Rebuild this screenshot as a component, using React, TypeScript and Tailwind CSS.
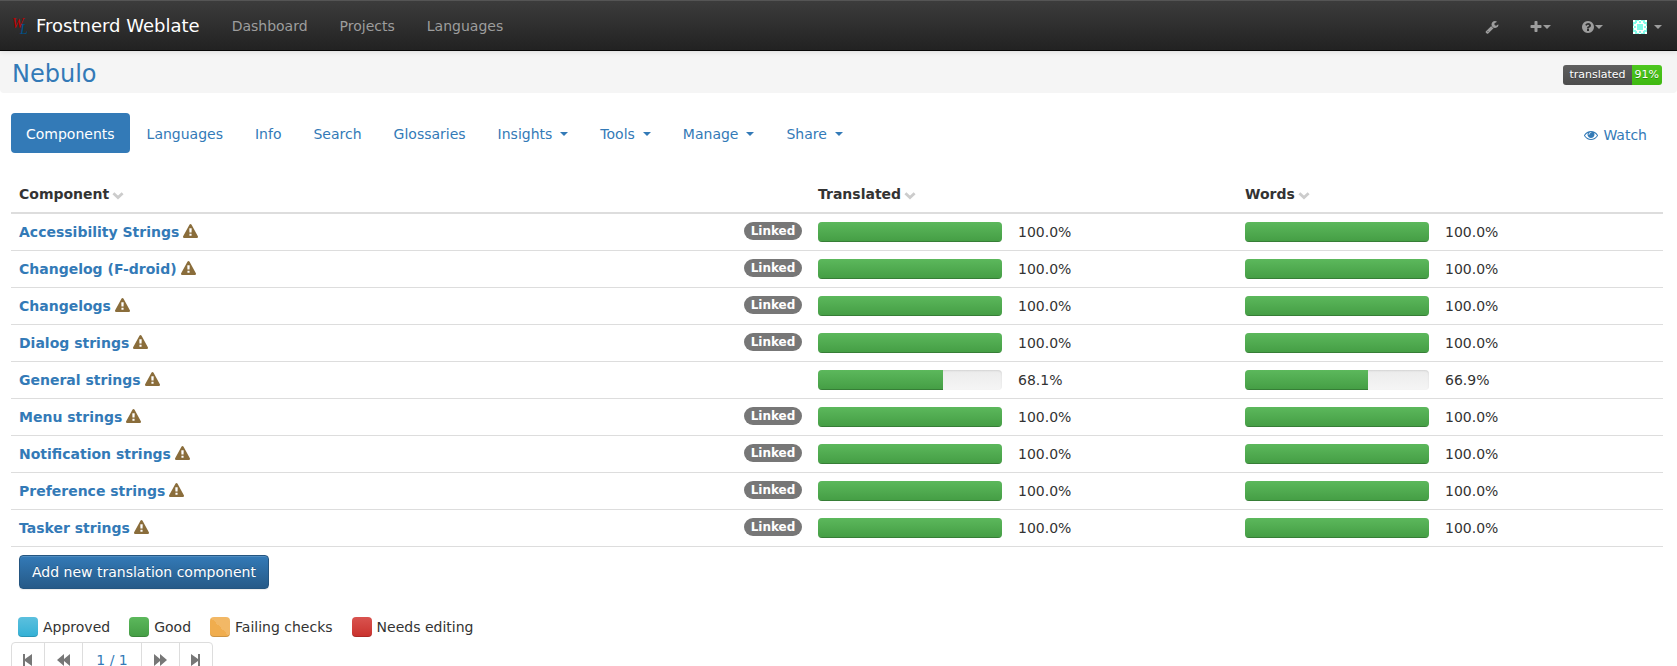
import React from "react";

const ICONS = {
  eye: "M1664 960q-152-236-381-353 61 104 61 225 0 185-131.5 316.5t-316.5 131.5-316.5-131.5-131.5-316.5q0-121 61-225-229 117-381 353 133 205 333.5 326.5t434.5 121.5 434.5-121.5 333.5-326.5zm-720-384q0-20-14-34t-34-14q-125 0-214.5 89.5t-89.5 214.5q0 20 14 34t34 14 34-14 14-34q0-86 61-147t147-61q20 0 34-14t14-34zm848 384q0 34-20 69-140 230-376.5 368.5t-499.5 138.5-499.5-139-376.5-368q-20-35-20-69t20-69q140-229 376.5-368t499.5-139 499.5 139 376.5 368q20 35 20 69z",
  wrench: "M448 1472q0-26-19-45t-45-19-45 19-19 45 19 45 45 19 45-19 19-45zm644-420l-682 682q-37 37-90 37-52 0-91-37l-106-108q-38-36-38-90 0-53 38-91l681-681q39 98 114.5 173.5t173.5 114.5zm634-435q0 39-23 106-47 134-164.5 217.5t-258.5 83.5q-185 0-316.5-131.5t-131.5-316.5 131.5-316.5 316.5-131.5q58 0 121.5 16.5t107.5 46.5q16 11 16 28t-16 28l-293 169v224l193 107q5-3 79-48.5t135.5-81 70.5-35.5q15 0 23.5 10t8.5 25z",
  plus: "M1600 736v192q0 40-28 68t-68 28h-416v416q0 40-28 68t-68 28h-192q-40 0-68-28t-28-68v-416h-416q-40 0-68-28t-28-68v-192q0-40 28-68t68-28h416v-416q0-40 28-68t68-28h192q40 0 68 28t28 68v416h416q40 0 68 28t28 68z",
  help: "M1024 1376v-192q0-14-9-23t-23-9h-192q-14 0-23 9t-9 23v192q0 14 9 23t23 9h192q14 0 23-9t9-23zm256-672q0-88-55.5-163t-138.5-116-170-41q-243 0-371 213-15 24 8 42l132 100q7 6 19 6 16 0 25-12 53-68 86-92 34-24 86-24 48 0 85.5 26t37.5 59q0 38-20 61t-68 45q-63 28-115.5 86.5t-52.5 125.5v36q0 14 9 23t23 9h192q14 0 23-9t9-23q0-19 21.5-49.5t54.5-49.5q32-18 49-28.5t46-35 44.5-48 28-60.5 12.5-81zm384 192q0 209-103 385.5t-279.5 279.5-385.5 103-385.5-103-279.5-279.5-103-385.5 103-385.5 279.5-279.5 385.5-103 385.5 103 279.5 279.5 103 385.5z",
  warning: "M1024 1375v-190q0-14-9.5-23.5t-22.5-9.5h-192q-13 0-22.5 9.5t-9.5 23.5v190q0 14 9.5 23.5t22.5 9.5h192q13 0 22.5-9.5t9.5-23.5zm-2-374l18-459q0-12-10-19-13-11-24-11h-220q-11 0-24 11-10 7-10 21l17 457q0 10 10 16.5t24 6.5h185q14 0 23.5-6.5t10.5-16.5zm-14-934l768 1408q35 63-2 126-17 29-46.5 46t-63.5 17h-1536q-34 0-63.5-17t-46.5-46q-37-63-2-126l768-1408q17-31 47-49t65-18 65 18 47 49z",
};

function Icon({ name, className = "size-[14px]" }: { name: keyof typeof ICONS; className?: string }) {
  return (
    <svg viewBox="0 0 1792 1792" fill="currentColor" aria-hidden="true" className={className}>
      <path d={ICONS[name]} />
    </svg>
  );
}

function Caret() {
  return (
    <svg viewBox="0 0 8 4" fill="currentColor" aria-hidden="true" className="h-1 w-2">
      <path d="M0 0h8L4 4z" />
    </svg>
  );
}

function Logo() {
  return (
    <svg viewBox="0 0 20 20" aria-hidden="true" className="size-5 font-['Liberation_Serif',serif] italic">
      <text x="1" y="12" fontSize="14" fill="#c00000">W</text>
      <text x="9" y="18" fontSize="14" fill="#00528c">L</text>
    </svg>
  );
}

function Avatar() {
  return (
    <svg viewBox="0 0 14 14" aria-hidden="true" className="size-[14px]">
      <path fill="#fff" d="M0 0h14v14H0z" />
      <path
        fill="#84fbe9"
        d="M4 4h6v6H4zM2 0h4v1H4v2H2zM8 0h4v3h-2V1H8zM6 1h2v2H6zM2 11h2v2h2v1H2zM10 11h2v3H8v-1h2zM6 11h2v2H6zM0 2h3v2H1v2H0zM11 2h3v4h-1V4h-2zM0 8h1v2h2v2H0zM13 8h1v4h-3v-2h2zM1 6h2v2H1zM11 6h2v2h-2z"
      />
    </svg>
  );
}

function SortHeading({ children }: { children: React.ReactNode }) {
  return (
    <button type="button" className="flex items-center gap-[3px] pt-[2px] font-bold">
      {children}
      <svg viewBox="0 0 12 8" aria-hidden="true" className="mt-1 h-2 w-3 text-[#ccc]">
        <path d="M1.4 1.2L6 5.6l4.6-4.4" fill="none" stroke="currentColor" strokeWidth="2.8" />
      </svg>
    </button>
  );
}

function Progress({ value, label }: { value: number; label: string }) {
  return (
    <div
      role="progressbar"
      aria-label={label}
      aria-valuenow={value}
      className="h-5 w-[184px] overflow-hidden rounded bg-linear-to-b from-[#ebebeb] to-[#f5f5f5] shadow-[inset_0_1px_2px_rgba(0,0,0,0.1)]"
    >
      <div
        className="h-full bg-linear-to-b from-[#5cb85c] to-[#449d44] shadow-[inset_0_-1px_0_rgba(0,0,0,0.2)]"
        style={{ width: `${value}%` }}
      />
    </div>
  );
}

const components = [
  { name: "Accessibility Strings", linked: true, translated: 100, words: 100 },
  { name: "Changelog (F-droid)", linked: true, translated: 100, words: 100 },
  { name: "Changelogs", linked: true, translated: 100, words: 100 },
  { name: "Dialog strings", linked: true, translated: 100, words: 100 },
  { name: "General strings", linked: false, translated: 68.1, words: 66.9 },
  { name: "Menu strings", linked: true, translated: 100, words: 100 },
  { name: "Notification strings", linked: true, translated: 100, words: 100 },
  { name: "Preference strings", linked: true, translated: 100, words: 100 },
  { name: "Tasker strings", linked: true, translated: 100, words: 100 },
];

const tabs = ["Languages", "Info", "Search", "Glossaries"];
const menus = ["Insights", "Tools", "Manage", "Share"];

const legend = [
  { label: "Approved", color: "bg-linear-to-b from-[#5bc0de] to-[#31b0d5]" },
  { label: "Good", color: "bg-linear-to-b from-[#5cb85c] to-[#449d44]" },
  { label: "Failing checks", color: "bg-linear-to-tr from-[#f0ad4e] from-50% to-[#f2b866] to-50%" },
  { label: "Needs editing", color: "bg-linear-to-b from-[#d9534f] to-[#c9302c]" },
];

const pageLink = "flex h-[34px] items-center justify-center border-r border-[#ddd] last:border-r-0";

export default function App() {
  return (
    <div className="h-screen overflow-hidden bg-white font-['DejaVu_Sans',Verdana,sans-serif] text-sm leading-5 text-[#333]">
      <nav className="relative flex h-[51px] items-center justify-between border-t border-b border-t-[#555] border-b-[#080808] bg-linear-to-b from-[#3c3c3c] to-[#222] pr-[15px] pl-[11px] text-[#9d9d9d] shadow-[0_1px_5px_rgba(0,0,0,0.1)]">
        <div className="flex items-center">
          <a href="#home" className="flex items-center gap-[5px] text-lg text-white">
            <Logo />
            Frostnerd Weblate
          </a>
          <div className="ml-8 flex gap-8">
            <a href="#dashboard">Dashboard</a>
            <a href="#projects">Projects</a>
            <a href="#languages">Languages</a>
          </div>
        </div>
        <div className="flex items-center gap-[30px] pt-[2px]">
          <a href="#manage" aria-label="Manage site">
            <Icon name="wrench" />
          </a>
          <button type="button" aria-label="Add" className="flex items-center">
            <Icon name="plus" />
            <Caret />
          </button>
          <button type="button" aria-label="Help" className="flex items-center">
            <Icon name="help" />
            <Caret />
          </button>
          <button type="button" aria-label="Account" className="flex items-center gap-[7px]">
            <Avatar />
            <Caret />
          </button>
        </div>
      </nav>

      <header className="flex h-[42px] items-center justify-between rounded-b bg-[#f5f5f5] pt-[3px] pr-[15px] pl-3">
        <h1 className="text-2xl leading-7 text-[#337ab7]">
          <a href="#nebulo">Nebulo</a>
        </h1>
        <a
          href="#status"
          className="mt-[2px] flex h-5 overflow-hidden rounded-[3px] text-[11px] text-white [text-shadow:0_1px_0_rgba(0,0,0,0.3)]"
        >
          <span className="bg-linear-to-b from-[#5f5f5f] to-[#4c4c4c] px-[6px]">translated</span>
          <span className="bg-linear-to-b from-[#4dc71f] to-[#3fb911] px-[3px]">91%</span>
        </a>
      </header>

      <main className="pr-[14px] pl-[11px]">
        <div className="mt-5 flex items-center justify-between text-[#337ab7]">
          <div className="flex gap-[2px]">
            <a href="#components" className="rounded bg-[#337ab7] px-[15px] pt-[11px] pb-[9px] text-white">
              Components
            </a>
            {tabs.map((tab) => (
              <a key={tab} href={`#${tab}`} className="px-[15px] pt-[11px] pb-[9px]">
                {tab}
              </a>
            ))}
            {menus.map((menu) => (
              <button key={menu} type="button" className="flex items-center gap-2 px-[15px] pt-[11px] pb-[9px]">
                {menu}
                <Caret />
              </button>
            ))}
          </div>
          <button type="button" className="mr-4 flex items-center gap-[5px] pt-1">
            <Icon name="eye" />
            Watch
          </button>
        </div>

        <table className="mt-5 w-full table-fixed border-collapse">
          <colgroup>
            <col />
            <col className="w-[74px]" />
            <col className="w-[200px]" />
            <col className="w-[227px]" />
            <col className="w-[200px]" />
            <col className="w-[226px]" />
          </colgroup>
          <thead>
            <tr className="h-[40px] border-b-2 border-[#ddd] text-left">
              <th colSpan={2} className="px-2">
                <SortHeading>Component</SortHeading>
              </th>
              <th colSpan={2} className="px-2">
                <SortHeading>Translated</SortHeading>
              </th>
              <th colSpan={2} className="px-2">
                <SortHeading>Words</SortHeading>
              </th>
            </tr>
          </thead>
          <tbody>
            {components.map((item) => (
              <tr key={item.name} className="h-[37px] border-b border-[#ddd]">
                <th scope="row" className="px-2 text-left">
                  <span className="flex items-center gap-1">
                    <a href="#component" className="font-bold text-[#337ab7]">
                      {item.name}
                    </a>
                    <Icon name="warning" className="size-[15px] text-[#8a6d3b]" />
                  </span>
                </th>
                <td className="px-2">
                  {item.linked && (
                    <span className="mb-[2px] flex h-[18px] items-center justify-center rounded-full bg-[#777] text-xs font-bold text-white">
                      Linked
                    </span>
                  )}
                </td>
                <td className="px-2">
                  <Progress value={item.translated} label={`${item.name} translated`} />
                </td>
                <td className="px-2">{item.translated.toFixed(1)}%</td>
                <td className="px-2">
                  <Progress value={item.words} label={`${item.name} words`} />
                </td>
                <td className="px-2">{item.words.toFixed(1)}%</td>
              </tr>
            ))}
          </tbody>
        </table>

        <button
          type="button"
          className="mt-2 ml-2 h-[34px] rounded border border-[#245580] bg-linear-to-b from-[#337ab7] to-[#265a88] px-3 text-white shadow-[inset_0_1px_0_rgba(255,255,255,0.15),0_1px_1px_rgba(0,0,0,0.075)] [text-shadow:0_-1px_0_rgba(0,0,0,0.2)]"
        >
          Add new translation component
        </button>

        <ul className="mt-7 ml-[7px] flex gap-[19px]">
          {legend.map((item) => (
            <li key={item.label} className="flex items-center gap-[5px]">
              <span className={`size-5 rounded shadow-[inset_0_-1px_0_rgba(0,0,0,0.15)] ${item.color}`} />
              {item.label}
            </li>
          ))}
        </ul>

        <div className="mt-[5px] flex w-fit rounded border border-[#ddd] text-[#777]">
          <button type="button" aria-label="First page" className={`${pageLink} w-[33px]`}>
            <svg viewBox="0 0 10 12" fill="currentColor" className="h-3 w-[10px]">
              <path d="M0 0h2v5l7-5v12L2 7v5H0z" />
            </svg>
          </button>
          <button type="button" aria-label="Previous page" className={`${pageLink} w-[38px]`}>
            <svg viewBox="0 0 13 12" fill="currentColor" className="h-3 w-[13px]">
              <path d="M0 6l7-6v5l6-5v12L7 7v5z" />
            </svg>
          </button>
          <a href="#page" className={`${pageLink} w-[59px] text-[#337ab7]`}>
            1 / 1
          </a>
          <button type="button" aria-label="Next page" className={`${pageLink} w-[38px]`}>
            <svg viewBox="0 0 13 12" fill="currentColor" className="h-3 w-[13px]">
              <path d="M13 6L6 0v5L0 0v12l6-5v5z" />
            </svg>
          </button>
          <button type="button" aria-label="Last page" className={`${pageLink} w-[32px]`}>
            <svg viewBox="0 0 10 12" fill="currentColor" className="h-3 w-[10px]">
              <path d="M9 0H7v5L0 0v12l7-5v5h2z" />
            </svg>
          </button>
        </div>
      </main>
    </div>
  );
}
